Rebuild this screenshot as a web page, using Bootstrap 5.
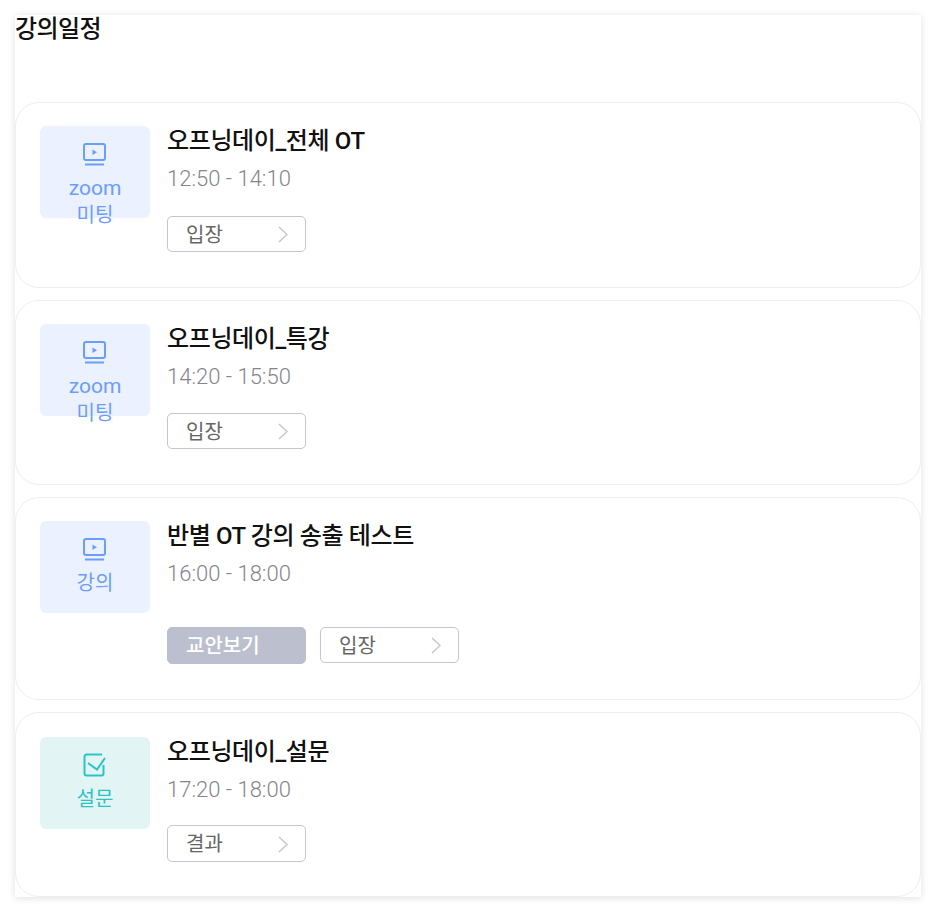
<!DOCTYPE html>
<html lang="ko">
<head>
<meta charset="utf-8">
<title>강의일정</title>
<link href="https://cdn.jsdelivr.net/npm/bootstrap@5.3.0/dist/css/bootstrap.min.css" rel="stylesheet">
<style>
html,body{height:100%;background:#fff;overflow:hidden}
body{font-family:Roboto,"Noto Sans CJK KR",sans-serif;padding:15px 15px 0}
.sched-panel{width:906px;height:882px;background:#fff;box-shadow:0 1px 7px rgba(0,0,0,.13)}
.sched-head{font-size:24px;font-weight:500;line-height:28px;letter-spacing:-.6px;height:87px;color:#111;margin:0}
.sched-list{gap:12px}
.sched-item{border:1px solid #eeeef3;border-radius:24px;padding:23px 24px 0;background:#fff;gap:17px}
.h-a{height:186px}.h-b{height:185px}.h-c{height:203px}.h-d{height:185px;padding-top:24px}
.sched-thumb{width:110px;height:92px;border-radius:6px;flex:none;padding-top:16px;font-size:20px;line-height:27px;text-align:center;font-weight:400}
.thumb-blue{background:#ebf1ff;color:#6b9dfb}
.thumb-teal{background:#e3f4f4;color:#2cc3c7}
.sched-thumb svg{display:block;margin:0 auto 9px}
.zoom-word{font-size:21px}
.sched-title{font-size:24px;font-weight:500;line-height:30px;letter-spacing:-.38px;color:#111;margin:0 0 8px}
.sched-time{font-size:22px;font-weight:300;line-height:30px;color:#85858b}
.sched-btn{width:139px;height:36px;border:1px solid #c3c5d0;border-radius:5px;background:#fff;color:#666;font-size:20px;line-height:34px;padding:1px 17px 0 18px}
.sched-fill{background:#bcc0ce;border-color:#bcc0ce;color:#fff;font-weight:500;height:37px}
.btn-tall{height:37px}
.btn-row{gap:14px;margin-top:22px}
.btn-row-b{margin-top:21px}
.btn-row-d{margin-top:20px}
.btn-row-far{margin-top:38px}
</style>
</head>
<body>
<div class="sched-panel">
  <h2 class="sched-head">강의일정</h2>
  <div class="sched-list d-flex flex-column">
    <div class="sched-item h-a d-flex">
      <div class="sched-thumb thumb-blue">
        <svg width="24" height="24" viewBox="0 0 24 24" fill="none" stroke="currentColor" stroke-width="2"><rect x="1" y="2" width="21" height="16" rx="2"/><path d="M2 22.5h19"/><path d="M9.5 7.5l4.5 2.7-4.5 2.7z" fill="currentColor" stroke="none"/></svg>
        <span class="zoom-word">zoom</span><br>미팅
      </div>
      <div>
        <h3 class="sched-title">오프닝데이_전체 OT</h3>
        <div class="sched-time">12:50 - 14:10</div>
        <div class="btn-row d-flex">
          <a class="sched-btn d-flex justify-content-between align-items-center text-decoration-none">입장<svg width="10" height="17" viewBox="0 0 10 17" fill="none" stroke="#c3c5d0" stroke-width="1.4"><path d="M1 1l8 7.5-8 7.5"/></svg></a>
        </div>
      </div>
    </div>
    <div class="sched-item h-b d-flex">
      <div class="sched-thumb thumb-blue">
        <svg width="24" height="24" viewBox="0 0 24 24" fill="none" stroke="currentColor" stroke-width="2"><rect x="1" y="2" width="21" height="16" rx="2"/><path d="M2 22.5h19"/><path d="M9.5 7.5l4.5 2.7-4.5 2.7z" fill="currentColor" stroke="none"/></svg>
        <span class="zoom-word">zoom</span><br>미팅
      </div>
      <div>
        <h3 class="sched-title">오프닝데이_특강</h3>
        <div class="sched-time">14:20 - 15:50</div>
        <div class="btn-row btn-row-b d-flex">
          <a class="sched-btn d-flex justify-content-between align-items-center text-decoration-none">입장<svg width="10" height="17" viewBox="0 0 10 17" fill="none" stroke="#c3c5d0" stroke-width="1.4"><path d="M1 1l8 7.5-8 7.5"/></svg></a>
        </div>
      </div>
    </div>
    <div class="sched-item h-c d-flex">
      <div class="sched-thumb thumb-blue">
        <svg width="24" height="24" viewBox="0 0 24 24" fill="none" stroke="currentColor" stroke-width="2"><rect x="1" y="2" width="21" height="16" rx="2"/><path d="M2 22.5h19"/><path d="M9.5 7.5l4.5 2.7-4.5 2.7z" fill="currentColor" stroke="none"/></svg>
        강의
      </div>
      <div>
        <h3 class="sched-title">반별 OT 강의 송출 테스트</h3>
        <div class="sched-time">16:00 - 18:00</div>
        <div class="btn-row btn-row-far d-flex align-items-start">
          <a class="sched-btn sched-fill d-flex align-items-center text-decoration-none">교안보기</a>
          <a class="sched-btn d-flex justify-content-between align-items-center text-decoration-none">입장<svg width="10" height="17" viewBox="0 0 10 17" fill="none" stroke="#c3c5d0" stroke-width="1.4"><path d="M1 1l8 7.5-8 7.5"/></svg></a>
        </div>
      </div>
    </div>
    <div class="sched-item h-d d-flex">
      <div class="sched-thumb thumb-teal">
        <svg width="24" height="24" viewBox="0 0 24 24" fill="none" stroke="currentColor" stroke-width="2"><path d="M19 1.5H3.5a2 2 0 0 0-2 2v17a2 2 0 0 0 2 2h15a2 2 0 0 0 2-2V12"/><path d="M5 10l9 6.5L22 5"/></svg>
        설문
      </div>
      <div>
        <h3 class="sched-title">오프닝데이_설문</h3>
        <div class="sched-time">17:20 - 18:00</div>
        <div class="btn-row btn-row-d d-flex">
          <a class="sched-btn btn-tall d-flex justify-content-between align-items-center text-decoration-none">결과<svg width="10" height="17" viewBox="0 0 10 17" fill="none" stroke="#c3c5d0" stroke-width="1.4"><path d="M1 1l8 7.5-8 7.5"/></svg></a>
        </div>
      </div>
    </div>
  </div>
</div>
<script src="https://cdn.jsdelivr.net/npm/bootstrap@5.3.0/dist/js/bootstrap.bundle.min.js"></script>
</body>
</html>
